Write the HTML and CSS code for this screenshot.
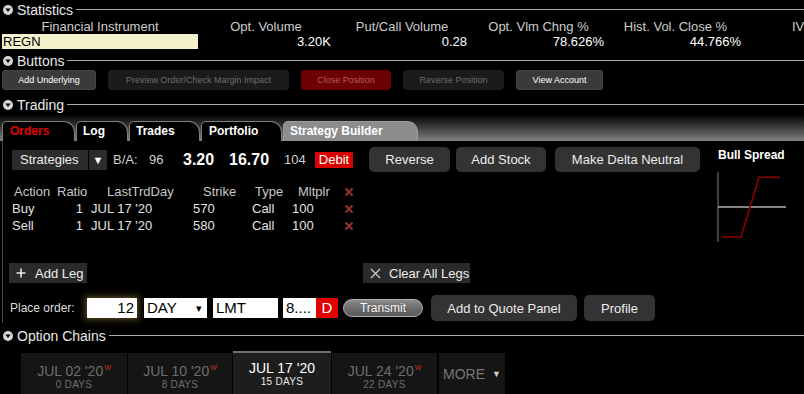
FILE: index.html
```html
<!DOCTYPE html>
<html>
<head>
<meta charset="utf-8">
<link rel="stylesheet" href="styles.css">
</head>
<body>
<div class="page">
  <div class="sec-head">
    <svg class="disc" width="10" height="10" viewBox="0 0 10 10"><circle cx="5" cy="5" r="5" fill="#d6d6d6"/><path d="M2.4 3.6 L7.6 3.6 L5 7 Z" fill="#000"/></svg>
    <span class="sec-title">Statistics</span><span class="rule"></span>
  </div>
  <div class="stats">
    <div class="sh">Financial Instrument</div>
    <div class="sh">Opt. Volume</div>
    <div class="sh">Put/Call Volume</div>
    <div class="sh">Opt. Vlm Chng %</div>
    <div class="sh">Hist. Vol. Close %</div>
    <div class="sh iv">IV</div>
    <div class="sym">REGN</div>
    <div class="sv">3.20K</div>
    <div class="sv">0.28</div>
    <div class="sv">78.626%</div>
    <div class="sv">44.766%</div>
    <div class="sv"></div>
  </div>

  <div class="sec-head sec-buttons">
    <svg class="disc" width="10" height="10" viewBox="0 0 10 10"><circle cx="5" cy="5" r="5" fill="#d6d6d6"/><path d="M2.4 3.6 L7.6 3.6 L5 7 Z" fill="#000"/></svg>
    <span class="sec-title">Buttons</span><span class="rule"></span>
  </div>
  <div class="btn-row">
    <button class="sbtn on w-under">Add Underlying</button>
    <button class="sbtn off w-preview">Preview Order/Check Margin Impact</button>
    <button class="sbtn red w-close">Close Position</button>
    <button class="sbtn off w-reverse">Reverse Position</button>
    <button class="sbtn on w-view">View Account</button>
  </div>

  <div class="sec-head sec-trading">
    <svg class="disc" width="10" height="10" viewBox="0 0 10 10"><circle cx="5" cy="5" r="5" fill="#d6d6d6"/><path d="M2.4 3.6 L7.6 3.6 L5 7 Z" fill="#000"/></svg>
    <span class="sec-title">Trading</span><span class="rule"></span>
  </div>
  <div class="tabbar">
    <div class="tab t-orders red-text">Orders</div>
    <div class="tab t-log">Log</div>
    <div class="tab t-trades">Trades</div>
    <div class="tab t-portfolio">Portfolio</div>
    <div class="tab t-sb active">Strategy Builder</div>
  </div>

  <div class="panel">
    <div class="main">
      <div class="row1">
        <div class="strat">Strategies</div>
        <div class="strat-arrow">&#9660;</div>
        <span class="ba-l">B/A:</span>
        <span class="ba-n w96">96</span>
        <span class="ba-b w320">3.20</span>
        <span class="ba-b w1670">16.70</span>
        <span class="ba-n w104">104</span>
        <span class="debit">Debit</span>
        <button class="gbtn w-rev">Reverse</button>
        <button class="gbtn w-stock">Add Stock</button>
        <button class="gbtn w-delta">Make Delta Neutral</button>
      </div>

      <div class="legs">
        <div class="lh c1">Action</div>
        <div class="lh c2">Ratio</div>
        <div class="lh c3">LastTrdDay</div>
        <div class="lh c4">Strike</div>
        <div class="lh c5">Type</div>
        <div class="lh c6">Mltplr</div>
        <div class="lh c7"><svg width="10" height="10" viewBox="0 0 10 10"><path d="M1.5 1.5 L8.5 8.5 M8.5 1.5 L1.5 8.5" stroke="#8a2e2e" stroke-width="2.4"/></svg></div>

        <div class="lc">Buy</div>
        <div class="lc r">1</div>
        <div class="lc">JUL 17 '20</div>
        <div class="lc">570</div>
        <div class="lc">Call</div>
        <div class="lc">100</div>
        <div class="lc x"><svg width="10" height="10" viewBox="0 0 10 10"><path d="M1.5 1.5 L8.5 8.5 M8.5 1.5 L1.5 8.5" stroke="#8a2e2e" stroke-width="2.4"/></svg></div>

        <div class="lc">Sell</div>
        <div class="lc r">1</div>
        <div class="lc">JUL 17 '20</div>
        <div class="lc">580</div>
        <div class="lc">Call</div>
        <div class="lc">100</div>
        <div class="lc x"><svg width="10" height="10" viewBox="0 0 10 10"><path d="M1.5 1.5 L8.5 8.5 M8.5 1.5 L1.5 8.5" stroke="#8a2e2e" stroke-width="2.4"/></svg></div>
      </div>

      <div class="leg-actions">
        <div class="flat add-leg"><svg width="10" height="10" viewBox="0 0 10 10"><path d="M5 0.5 V9.5 M0.5 5 H9.5" stroke="#e8e8e8" stroke-width="1.6"/></svg><span>Add Leg</span></div>
        <div class="flat clear-legs"><svg width="11" height="11" viewBox="0 0 11 11"><path d="M1 1 L10 10 M10 1 L1 10" stroke="#cfcfcf" stroke-width="1.2"/></svg><span>Clear All Legs</span></div>
      </div>

      <div class="order-row">
        <span class="po-label">Place order:</span>
        <div class="fld qty">12</div>
        <div class="fld tif">DAY<span class="dd">&#9662;</span></div>
        <div class="fld lmt">LMT</div>
        <div class="fld px">8....</div><div class="dbox">D</div>
        <button class="transmit">Transmit</button>
        <button class="gbtn w-quote">Add to Quote Panel</button>
        <button class="gbtn w-profile">Profile</button>
      </div>
    </div>
    <aside class="chart">
      <div class="chart-title">Bull Spread</div>
      <svg class="payoff" width="80" height="76" viewBox="0 0 80 76">
        <line x1="2" y1="2" x2="2" y2="72" stroke="#6a6a6a" stroke-width="1.2"/>
        <line x1="2" y1="37" x2="70" y2="37" stroke="#b0b0b0" stroke-width="1.6"/>
        <polyline points="6,67 25,67 43,7.3 64,7.3" fill="none" stroke="#8e0000" stroke-width="1.6"/>
      </svg>
    </aside>
  </div>

  <div class="sec-head sec-chains">
    <svg class="disc" width="10" height="10" viewBox="0 0 10 10"><circle cx="5" cy="5" r="5" fill="#d6d6d6"/><path d="M2.4 3.6 L7.6 3.6 L5 7 Z" fill="#000"/></svg>
    <span class="sec-title">Option Chains</span><span class="rule"></span>
  </div>
  <div class="chains">
    <div class="ctab w1"><div class="cd">JUL 02 '20<sup>W</sup></div><div class="cdays">0 DAYS</div></div>
    <div class="ctab w2"><div class="cd">JUL 10 '20<sup>W</sup></div><div class="cdays">8 DAYS</div></div>
    <div class="ctab w3 cur"><div class="cd">JUL 17 '20</div><div class="cdays">15 DAYS</div></div>
    <div class="ctab w4"><div class="cd">JUL 24 '20<sup>W</sup></div><div class="cdays">22 DAYS</div></div>
    <div class="ctab w5 more"><span>MORE</span><span class="more-arrow">&#9660;</span></div>
  </div>
</div>
</body>
</html>
```

FILE: styles.css
```css
* { box-sizing: border-box; }
html, body {
  margin: 0;
  padding: 0;
  background: #000;
  width: 804px;
  height: 394px;
  overflow: hidden;
}
body {
  font-family: "Liberation Sans", Arial, sans-serif;
  color: #e0e0e0;
}
button {
  font-family: inherit;
  border: none;
  padding: 0;
  cursor: default;
}
.page { padding-top: 1px; }

/* section headers */
.sec-head {
  display: flex;
  align-items: center;
  height: 18px;
  padding-left: 3px;
}
.disc { flex: none; }
.sec-title {
  margin-left: 4px;
  font-size: 14px;
  color: #e8e8e8;
  white-space: nowrap;
}
.rule {
  flex: 1;
  height: 1px;
  background: #a8a8a8;
  margin-left: 3px;
  margin-bottom: 2px;
}
.sec-buttons { margin-top: 2px; }
.sec-trading { margin-top: 6px; }
.sec-chains { margin-top: 4px; }

/* statistics */
.stats {
  display: grid;
  grid-template-columns: 196px 136px 136px 137px 137px 1fr;
  padding-left: 2px;
}
.sh {
  height: 15px;
  line-height: 15px;
  text-align: center;
  font-size: 13px;
  color: #cdcdcd;
  white-space: nowrap;
}
.sh.iv {
  text-align: left;
  padding-left: 48px;
}
.sym {
  height: 15px;
  margin-bottom: 1px;
  background: #f4f2cd;
  color: #000;
  font-size: 13px;
  line-height: 15px;
  padding-left: 1px;
}
.sv {
  height: 16px;
  line-height: 16px;
  text-align: right;
  padding-right: 3px;
  font-size: 13px;
  color: #fff;
}

/* button strip */
.btn-row {
  display: flex;
  gap: 12px;
  padding-left: 2px;
  height: 20px;
}
.sbtn {
  height: 20px;
  border-radius: 4px;
  font-size: 9px;
}
.sbtn.on { background: #3a3a3a; color: #fff; box-shadow: inset 0 0 0 1px #444; }
.sbtn.off { background: #1b1b1b; color: #6b6b6b; }
.sbtn.red { background: #6d0000; color: #b45f5f; }
.w-under { width: 94px; }
.w-preview { width: 181px; }
.w-close { width: 90px; }
.w-reverse { width: 101px; }
.w-view { width: 87px; }

/* trading tabs */
.tabbar {
  display: flex;
  align-items: flex-end;
  gap: 1px;
  height: 27px;
  padding-left: 2px;
  background: linear-gradient(to bottom, #000 0%, #2a2a2a 35%, #808080 100%);
}
.tab {
  height: 20px;
  line-height: 19px;
  padding-left: 7px;
  font-size: 12px;
  font-weight: bold;
  color: #fff;
  background: #000;
  border: 1px solid #7e7e7e;
  border-bottom: none;
  border-radius: 5px 11px 0 0;
  white-space: nowrap;
}
.tab.red-text { color: #e40000; }
.tab.active {
  background: #8c8c8c;
  border-color: #9c9c9c;
  padding-left: 6px;
}
.t-orders { width: 73px; }
.t-log { width: 52px; padding-left: 6px; }
.t-trades { width: 71px; padding-left: 6px; }
.t-portfolio { width: 81px; }
.t-sb { width: 135px; }

/* panel */
.panel {
  display: flex;
  margin-left: 2px;
  border-left: 1px solid #4a4a4a;
  padding: 6px 0 2px 6px;
}
.main { flex: 1; }
.row1 {
  display: flex;
  align-items: center;
  height: 25px;
  padding-left: 3px;
  font-size: 13px;
}
.strat {
  width: 76px;
  height: 20px;
  line-height: 20px;
  background: #2b2b2b;
  color: #ececec;
  padding-left: 8px;
}
.strat-arrow {
  width: 18px;
  height: 20px;
  line-height: 20px;
  margin-left: 1px;
  background: #2b2b2b;
  color: #fff;
  font-size: 11px;
  text-align: center;
}
.ba-l { margin-left: 6px; width: 36px; color: #cfcfcf; }
.ba-n { color: #cfcfcf; }
.ba-b { font-size: 16px; font-weight: bold; color: #fff; }
.w96 { width: 34px; }
.w320 { width: 46px; }
.w1670 { width: 55px; }
.w104 { width: 31px; }
.debit {
  width: 38px;
  height: 16px;
  line-height: 16px;
  background: #d60000;
  color: #fff;
  text-align: center;
}
.gbtn {
  height: 25px;
  border-radius: 5px;
  background: #333;
  color: #ececec;
  font-size: 13px;
}
.w-rev { width: 81px; margin-left: 16px; }
.w-stock { width: 90px; margin-left: 6px; }
.w-delta { width: 145px; margin-left: 9px; }

/* legs table */
.legs {
  display: grid;
  grid-template-columns: 45px 32px 104px 59px 40px 51px 14px;
  grid-template-rows: 16px 17px 17px;
  margin-top: 12px;
  padding-left: 3px;
  width: 360px;
  font-size: 13px;
}
.lh { color: #c8c8c8; line-height: 16px; white-space: nowrap; }
.lc { color: #e2e2e2; line-height: 17px; white-space: nowrap; }
.lh.c1 { padding-left: 2px; }
.lh.c2 { padding-left: 0; }
.lh.c3 { padding-left: 18px; }
.lh.c4 { padding-left: 10px; }
.lh.c5 { padding-left: 3px; }
.lh.c6 { padding-left: 6px; }
.lh.c7, .lc.x { display: flex; align-items: center; padding-left: 1px; }
.lc.r { text-align: right; padding-right: 6px; }
.lc:nth-child(7n+3) { padding-left: 2px; }

/* leg actions */
.leg-actions {
  display: flex;
  margin-top: 29px;
  height: 20px;
}
.flat {
  display: flex;
  align-items: center;
  height: 20px;
  background: #2a2a2a;
  font-size: 13px;
  color: #ececec;
}
.add-leg { width: 78px; padding-left: 7px; }
.add-leg span { margin-left: 9px; }
.clear-legs { width: 107px; padding-left: 7px; margin-left: 276px; }
.clear-legs span { margin-left: 8px; }

/* order row */
.order-row {
  display: flex;
  align-items: center;
  margin-top: 12px;
  height: 26px;
}
.po-label {
  width: 78px;
  padding-left: 1px;
  font-size: 12px;
  color: #dcdcdc;
}
.fld {
  height: 20px;
  line-height: 20px;
  background: #fff;
  color: #000;
  font-size: 15px;
  white-space: nowrap;
}
.qty {
  width: 50px;
  text-align: right;
  padding-right: 3px;
  box-shadow: 0 0 6px 2px rgba(150, 125, 60, 0.55);
}
.tif {
  width: 63px;
  margin-left: 7px;
  padding-left: 3px;
  position: relative;
}
.dd {
  position: absolute;
  right: 5px;
  top: 0;
  font-size: 11px;
}
.lmt { width: 65px; margin-left: 6px; padding-left: 3px; }
.px { width: 33px; margin-left: 5px; padding-left: 3px; }
.dbox {
  width: 22px;
  height: 20px;
  line-height: 20px;
  background: #e00000;
  color: #fff;
  font-size: 15px;
  text-align: center;
}
.transmit {
  width: 80px;
  height: 18px;
  margin-left: 5px;
  border-radius: 9px;
  border: 1px solid #b0b0b0;
  background: linear-gradient(to bottom, #8d8d8d 0%, #6a6a6a 55%, #5a5a5a 100%);
  color: #fff;
  font-size: 12px;
  text-shadow: 0 0 1px #333;
}
.w-quote { width: 146px; height: 26px; margin-left: 8px; }
.w-profile { width: 71px; height: 26px; margin-left: 7px; }

/* chart */
.chart {
  width: 94px;
  flex: none;
  padding-left: 8px;
}
.chart-title {
  height: 17px;
  line-height: 17px;
  font-size: 12px;
  font-weight: bold;
  color: #fff;
  white-space: nowrap;
}
.payoff {
  display: block;
  margin-top: 6px;
  margin-left: -2px;
}

/* option chains */
.chains {
  display: flex;
  align-items: flex-start;
  gap: 1px;
  margin-top: 6px;
  padding-left: 21px;
  height: 60px;
}
.ctab {
  height: 60px;
  margin-top: 2px;
  background: #151515;
  text-align: center;
  padding-top: 7px;
  color: #6e6e6e;
}
.ctab.cur {
  margin-top: 0;
  background: #1d1d1d;
  border-top: 2px solid #707070;
  color: #fff;
}
.w1 { width: 106px; }
.w2 { width: 104px; }
.w3 { width: 98px; }
.w4 { width: 105px; }
.w5 { width: 66px; margin-left: 1px; }
.cd {
  font-size: 14px;
  line-height: 16px;
  white-space: nowrap;
}
.cd sup {
  font-size: 7px;
  color: #c23030;
  vertical-align: 6px;
  margin-left: 1px;
}
.cdays {
  font-size: 10px;
  line-height: 12px;
  letter-spacing: 0.3px;
}
.cur .cdays { color: #e6e6e6; }
.more {
  display: flex;
  justify-content: center;
  align-items: flex-start;
  padding-top: 13px;
  font-size: 14px;
  color: #777;
}
.more-arrow {
  margin-left: 7px;
  font-size: 9px;
  color: #d0d0d0;
  line-height: 16px;
}
```
